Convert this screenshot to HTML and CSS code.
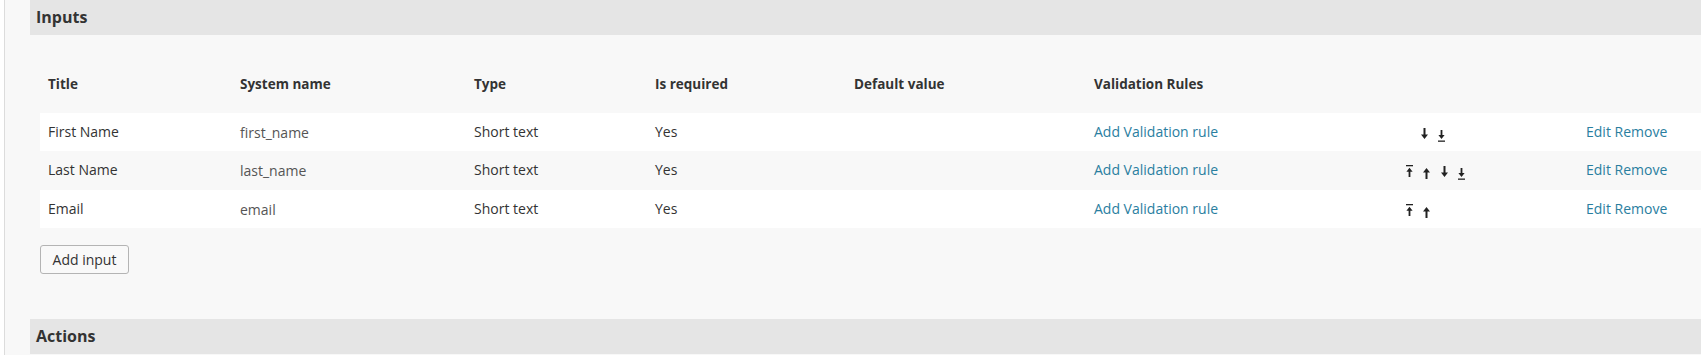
FILE: index.html
```html
<!DOCTYPE html>
<html lang="en">
<head>
  <meta charset="UTF-8" />
  <title>Form – Inputs</title>
  <link rel="stylesheet" href="styles.css">
</head>
<body>
  <div class="page">
    <div class="section">
      <h3 class="section-title">Inputs</h3>
      <div class="section-body">
        <table class="inputs-table">
          <colgroup>
            <col style="width:192px"><col style="width:234px"><col style="width:181px"><col style="width:199px">
            <col style="width:240px"><col style="width:312px"><col style="width:180px"><col>
          </colgroup>
          <thead>
            <tr>
              <th>Title</th>
              <th>System name</th>
              <th>Type</th>
              <th>Is required</th>
              <th>Default value</th>
              <th>Validation Rules</th>
              <th></th>
              <th></th>
            </tr>
          </thead>
          <tbody>
            <tr>
              <td>First Name</td>
              <td class="sys">first_name</td>
              <td>Short text</td>
              <td>Yes</td>
              <td></td>
              <td><a href="#">Add Validation rule</a></td>
              <td>
                <div class="order shift">
                  <a href="#" class="arr down"><svg width="7" height="11" viewBox="0 0 7 11"><path d="M2.5 0h2v6.5H7L3.5 11 0 6.5h2.5z"/></svg></a>
                  <a href="#" class="arr bottom"><svg width="7" height="12" viewBox="0 0 7 12"><path d="M2.6 0h1.8v5H6.6L3.5 9 .4 5h2.2z"/><rect x="0" y="10.5" width="7" height="1.3"/></svg></a>
                </div>
              </td>
              <td><a href="#">Edit</a> <a href="#">Remove</a></td>
            </tr>
            <tr>
              <td>Last Name</td>
              <td class="sys">last_name</td>
              <td>Short text</td>
              <td>Yes</td>
              <td></td>
              <td><a href="#">Add Validation rule</a></td>
              <td>
                <div class="order">
                  <a href="#" class="arr top"><svg width="7" height="12" viewBox="0 0 7 12"><rect x="0" y="0" width="7" height="1.3"/><path d="M3.5 2.8l3.1 4H4.4V12H2.6V6.8H.4z"/></svg></a>
                  <a href="#" class="arr up"><svg width="7" height="11" viewBox="0 0 7 11"><path d="M3.5 0L7 4.5H4.5V11h-2V4.5H0z"/></svg></a>
                  <a href="#" class="arr down"><svg width="7" height="11" viewBox="0 0 7 11"><path d="M2.5 0h2v6.5H7L3.5 11 0 6.5h2.5z"/></svg></a>
                  <a href="#" class="arr bottom"><svg width="7" height="12" viewBox="0 0 7 12"><path d="M2.6 0h1.8v5H6.6L3.5 9 .4 5h2.2z"/><rect x="0" y="10.5" width="7" height="1.3"/></svg></a>
                </div>
              </td>
              <td><a href="#">Edit</a> <a href="#">Remove</a></td>
            </tr>
            <tr>
              <td>Email</td>
              <td class="sys">email</td>
              <td>Short text</td>
              <td>Yes</td>
              <td></td>
              <td><a href="#">Add Validation rule</a></td>
              <td>
                <div class="order">
                  <a href="#" class="arr top"><svg width="7" height="12" viewBox="0 0 7 12"><rect x="0" y="0" width="7" height="1.3"/><path d="M3.5 2.8l3.1 4H4.4V12H2.6V6.8H.4z"/></svg></a>
                  <a href="#" class="arr up"><svg width="7" height="11" viewBox="0 0 7 11"><path d="M3.5 0L7 4.5H4.5V11h-2V4.5H0z"/></svg></a>
                </div>
              </td>
              <td><a href="#">Edit</a> <a href="#">Remove</a></td>
            </tr>
          </tbody>
        </table>
        <button class="btn">Add input</button>
      </div>
    </div>
    <div class="section">
      <h3 class="section-title">Actions</h3>
    </div>
  </div>
</body>
</html>
```

FILE: styles.css
```css
* { margin: 0; padding: 0; box-sizing: border-box; }
body {
  font-family: "Open Sans", "Liberation Sans", sans-serif;
  font-size: 14px;
  color: #333;
  background: #fff;
  overflow: hidden;
}
.page {
  margin-left: 4px;
  border-left: 1px solid #dcdcdc;
  background: #f8f8f8;
  min-height: 100vh;
  padding-left: 25px;
}
.section-title {
  height: 35px;
  line-height: 35px;
  padding: 0 6px;
  background: #e5e5e5;
  font-size: 16px;
  font-weight: 700;
  color: #333;
}
.section-body {
  padding: 27px 0 45px 10px;
}
.inputs-table {
  width: 100%;
  table-layout: fixed;
  border-collapse: collapse;
}
.inputs-table th {
  text-align: left;
  font-weight: 700;
  font-size: 13.5px;
  line-height: 20px;
  padding: 12px 8px 19px;
  white-space: nowrap;
}
.inputs-table tbody tr { height: 38.4px; }
.inputs-table td {
  line-height: 20px;
  padding: 9px 8px;
  white-space: nowrap;
  vertical-align: top;
}
.inputs-table tbody tr:nth-child(odd) { background: #fff; }
.inputs-table td.sys { color: #555; padding-top: 10px; padding-bottom: 8px; }
a { color: #2a7e9f; text-decoration: none; }
.order {
  display: flex;
  padding-top: 5px;
}
.order.shift { padding-left: 15px; }
.arr {
  display: block;
  width: 17.4px;
  color: #222;
}
.arr svg { display: block; fill: #222; }
.arr.top { margin-top: 0; }
.arr.up { margin-top: 3px; }
.arr.down { margin-top: 1px; }
.arr.bottom { margin-top: 3px; }
.btn {
  display: block;
  margin-top: 17px;
  width: 89px;
  height: 29px;
  font-family: inherit;
  font-size: 14px;
  color: #333;
  background: #f9f9f9;
  border: 1px solid #b4b4b4;
  border-radius: 3px;
}
```
